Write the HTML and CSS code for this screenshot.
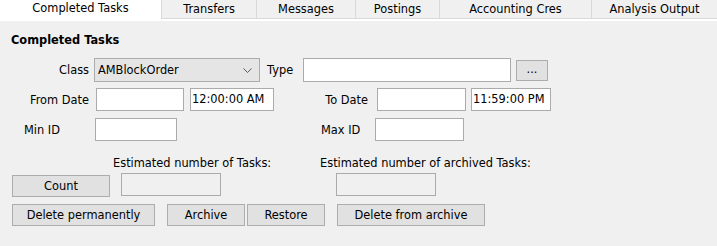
FILE: index.html
```html
<!DOCTYPE html>
<html>
<head>
<meta charset="utf-8">
<link rel="stylesheet" href="styles.css">
</head>
<body>
<div class="tabstrip">
  <div class="tab active">Completed Tasks</div>
  <div class="tab w-transfers">Transfers</div>
  <div class="tab w-messages">Messages</div>
  <div class="tab w-postings">Postings</div>
  <div class="tab w-accounting">Accounting Cres</div>
  <div class="tab w-analysis">Analysis Output</div>
</div>
<div class="panel">
  <div class="heading">Completed Tasks</div>
  <div class="row row-a">
    <div class="lbl lbl-right w-lbl1">Class</div>
    <div class="select">
      <span>AMBlockOrder</span>
      <svg class="chev" width="9" height="5" viewBox="0 0 9 5"><polyline points="0.5,0.5 4.5,4.5 8.5,0.5" fill="none" stroke="#5a5a5a" stroke-width="1"/></svg>
    </div>
    <div class="lbl type-lbl">Type</div>
    <div class="field type-field"></div>
    <div class="btn dots">...</div>
  </div>
  <div class="row row-b">
    <div class="lbl lbl-right w-lbl2">From Date</div>
    <div class="field date1"></div>
    <div class="field time1">12:00:00 AM</div>
    <div class="lbl lbl-right w-todate">To Date</div>
    <div class="field date2"></div>
    <div class="field time2">11:59:00 PM</div>
  </div>
  <div class="row row-c">
    <div class="lbl w-minid">Min ID</div>
    <div class="field minid"></div>
    <div class="lbl w-maxid">Max ID</div>
    <div class="field maxid"></div>
  </div>
  <div class="row row-d">
    <div class="lbl est1">Estimated number of Tasks:</div>
    <div class="lbl est2">Estimated number of archived Tasks:</div>
  </div>
  <div class="row row-e">
    <div class="btn count">Count</div>
    <div class="box box1"></div>
    <div class="box box2"></div>
  </div>
  <div class="row row-f">
    <div class="btn b-delperm">Delete permanently</div>
    <div class="btn b-archive">Archive</div>
    <div class="btn b-restore">Restore</div>
    <div class="btn b-delarch">Delete from archive</div>
  </div>
</div>
</body>
</html>
```
FILE: styles.css
```css
html, body {
  margin: 0;
  padding: 0;
  background: #f0f0f0;
}
body {
  width: 717px;
  height: 246px;
  overflow: hidden;
  font-family: "DejaVu Sans", sans-serif;
  font-size: 11.4px;
  color: #000;
}
.tabstrip {
  display: flex;
  align-items: flex-start;
  height: 21px;
  background: #ffffff;
}
.tab {
  box-sizing: border-box;
  height: 19px;
  line-height: 19px;
  text-align: center;
  background: #f0f0f0;
  border-right: 1px solid #d9d9d9;
  border-bottom: 1px solid #d9d9d9;
  white-space: nowrap;
  flex: none;
}
.tab.active {
  width: 161px;
  height: 21px;
  line-height: 17px;
  background: #ffffff;
  border: none;
}
.w-transfers { width: 96px; border-left: 1px solid #d9d9d9; }
.w-messages { width: 99px; }
.w-postings { width: 84px; }
.w-accounting { width: 152px; }
.w-analysis { width: 125px; border-right: none; }

.panel {
  margin-left: 1px;
  height: 225px;
  background: #f0f0f0;
}
.heading {
  font-weight: bold;
  padding-left: 10px;
  padding-top: 13px;
  line-height: 13px;
  height: 13px;
}
.row {
  display: flex;
  align-items: center;
}
.lbl {
  white-space: nowrap;
  flex: none;
}
.lbl-right { text-align: right; }
.field, .select, .box {
  box-sizing: border-box;
  flex: none;
  background: #ffffff;
  border: 1px solid #ababab;
  white-space: nowrap;
}
.btn {
  box-sizing: border-box;
  flex: none;
  background: #e1e1e1;
  border: 1px solid #adadad;
  text-align: center;
  white-space: nowrap;
}
.row-a { margin-top: 11px; height: 24px; }
.w-lbl1 { width: 88px; margin-right: 5px; }
.select {
  width: 166px;
  height: 24px;
  background: #e5e5e5;
  border-color: #acacac;
  display: flex;
  align-items: center;
  justify-content: space-between;
  padding: 0 7px 0 3px;
}
.type-lbl { margin-left: 7px; width: 36px; }
.type-field { width: 208px; height: 24px; }
.dots { width: 32px; height: 21px; margin-left: 5px; line-height: 17px; }

.row-b { margin-top: 6px; height: 23px; }
.w-lbl2 { width: 88px; margin-right: 7px; }
.date1 { width: 88px; height: 23px; }
.time1 { width: 84px; height: 23px; margin-left: 6px; line-height: 21px; padding-left: 1px; }
.w-todate { width: 94px; margin-right: 9px; }
.date2 { width: 89px; height: 23px; }
.time2 { width: 80px; height: 23px; margin-left: 5px; line-height: 21px; padding-left: 1px; }

.row-c { margin-top: 7px; height: 23px; }
.w-minid { width: 71px; margin-left: 23px; }
.minid { width: 82px; height: 23px; }
.w-maxid { width: 54px; margin-left: 144px; }
.maxid { width: 89px; height: 23px; }

.row-d { margin-top: 15px; height: 14px; }
.est1 { margin-left: 112px; width: 207px; }
.est2 { }

.row-e { margin-top: 3px; height: 24px; }
.count { width: 98px; height: 22px; margin-left: 11px; margin-top: 2px; line-height: 20px; }
.box { background: #f0f0f0; }
.box1 { width: 100px; height: 23px; margin-left: 11px; margin-top: -1px; }
.box2 { width: 100px; height: 23px; margin-left: 115px; margin-top: -1px; }

.row-f { margin-top: 7px; height: 22px; }
.row-f .btn { height: 22px; line-height: 20px; }
.b-delperm { width: 143px; margin-left: 11px; }
.b-archive { width: 78px; margin-left: 12px; }
.b-restore { width: 78px; margin-left: 2px; }
.b-delarch { width: 148px; margin-left: 12px; }
```
